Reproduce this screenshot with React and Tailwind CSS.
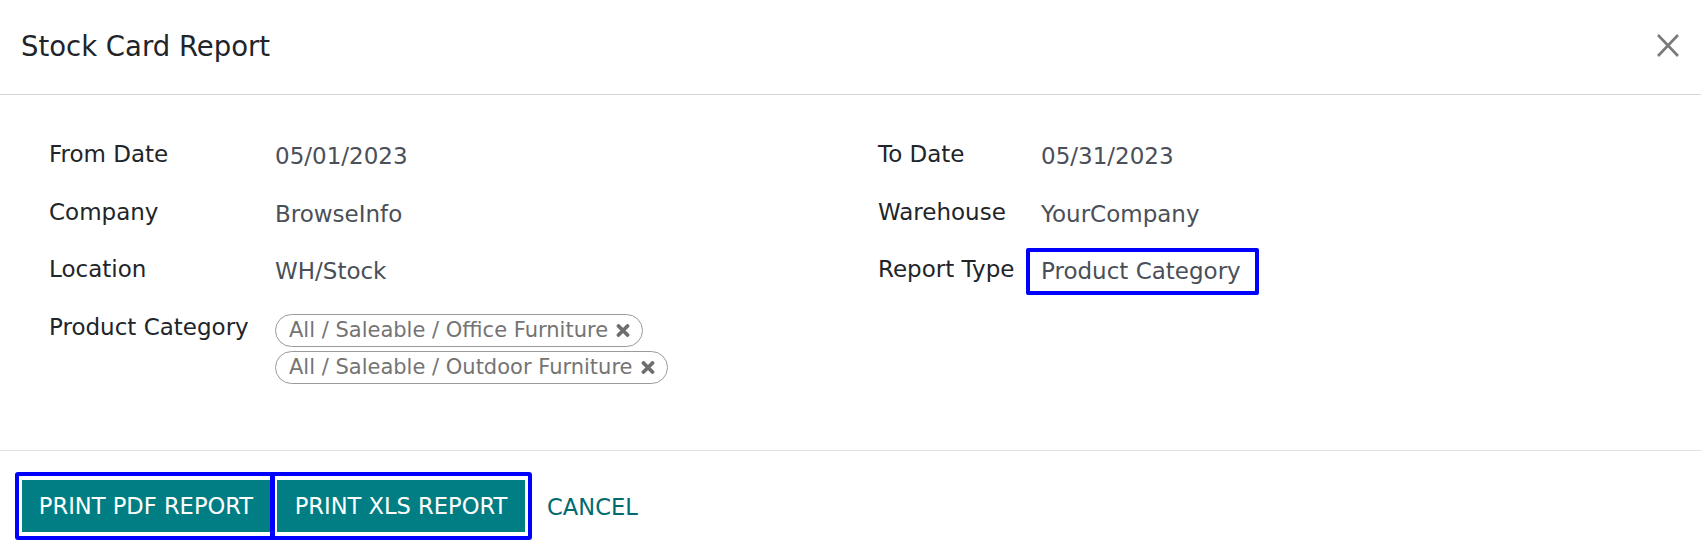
import React from 'react';

const LEFT_ROWS = [
  { label: 'From Date', value: '05/01/2023' },
  { label: 'Company', value: 'BrowseInfo' },
  { label: 'Location', value: 'WH/Stock' },
];

const RIGHT_ROWS = [
  { label: 'To Date', value: '05/31/2023' },
  { label: 'Warehouse', value: 'YourCompany' },
];

const CATEGORIES = ['All / Saleable / Office Furniture', 'All / Saleable / Outdoor Furniture'];

function Field({ label, labelWidth, children }) {
  return (
    <div className="flex h-[57.7px] items-start">
      <div className="shrink-0 leading-[33px] text-[#212529]" style={{ width: labelWidth }}>{label}</div>
      <div className="pt-[2px] leading-[33px] text-[#4b4f58]">{children}</div>
    </div>
  );
}

function Tag({ text }) {
  return (
    <div className="flex h-[33px] items-center rounded-full border border-[#9a9a9a] pl-[13px] pr-[12px] text-[21px] leading-[31px] text-[#747474]">
      <span>{text}</span>
      <svg className="ml-[8px]" width="14" height="13" viewBox="0 0 14 13">
        <path d="M2.5 2 L11.5 11 M11.5 2 L2.5 11" stroke="#6e6e6e" strokeWidth="3.8" strokeLinecap="round" />
      </svg>
    </div>
  );
}

export default function App() {
  return (
    <div className="flex h-[556px] w-full flex-col bg-white text-[23px]" style={{ fontFamily: '"DejaVu Sans", Verdana, sans-serif' }}>
      {/* Header */}
      <div className="flex h-[95px] shrink-0 items-center justify-between border-b border-[#d6d4da] pb-[3px] pl-[21px] pr-[22px]">
        <div className="text-[27.5px] leading-[36px] text-[#212529]">Stock Card Report</div>
        <svg width="22" height="23" viewBox="0 0 22 23">
          <path d="M1 1 L21 22 M21 1 L1 22" stroke="#7a7a7a" strokeWidth="2.6" />
        </svg>
      </div>

      {/* Body */}
      <div className="flex h-[355px] shrink-0 pl-[49px] pt-[43px]">
        <div className="flex w-[829px] shrink-0 flex-col">
          {LEFT_ROWS.map(r => (
            <Field key={r.label} label={r.label} labelWidth="226px">{r.value}</Field>
          ))}
          <div className="flex items-start">
            <div className="w-[226px] shrink-0 leading-[33px] text-[#212529]">Product Category</div>
            <div className="flex flex-col items-start gap-[3.5px] pt-[3px]">
              {CATEGORIES.map(c => <Tag key={c} text={c} />)}
            </div>
          </div>
        </div>

        <div className="flex flex-col">
          {RIGHT_ROWS.map(r => (
            <Field key={r.label} label={r.label} labelWidth="163px">{r.value}</Field>
          ))}
          <div className="flex h-[57.7px] items-start">
            <div className="w-[163px] shrink-0 leading-[33px] text-[#212529]">Report Type</div>
            <div className="-ml-[15px] -mt-[5px] flex h-[47px] w-[233px] items-center rounded-[2px] border-4 border-[#0000ff] pl-[11px] leading-[33px] text-[#4b4f58]">
              Product Category
            </div>
          </div>
        </div>
      </div>

      {/* Footer */}
      <div className="flex flex-1 items-start border-t border-[#dee2e6] pl-[15px] pt-[20.5px]">
        <div className="flex rounded-[3px] border-4 border-[#0000ff]">
          <div className="py-[4px] pl-[3px]">
            <button className="h-[52px] w-[248px] bg-[#017e84] text-[22.6px] leading-[52px] text-white">PRINT PDF REPORT</button>
          </div>
          <div className="w-[5px] bg-[#0000ff]" />
          <div className="py-[4px] pl-[2px] pr-[3px]">
            <button className="h-[52px] w-[248px] bg-[#017e84] text-[22.6px] leading-[52px] text-white">PRINT XLS REPORT</button>
          </div>
        </div>
        <button className="ml-[15px] mt-[19px] text-[22.6px] leading-[33px] text-[#016a70]">CANCEL</button>
      </div>
    </div>
  );
}
